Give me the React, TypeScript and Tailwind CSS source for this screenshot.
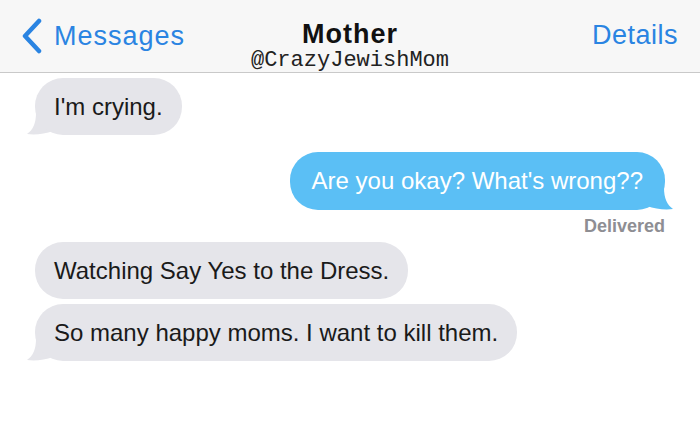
import React from 'react';

const sans = { fontFamily: '"Liberation Sans", Arial, sans-serif' };

function TailLeft({ color }: { color: string }) {
  return (
    <svg
      className="absolute -left-[8px] bottom-0"
      width="26"
      height="22"
      viewBox="0 0 26 22"
    >
      <path d="M26 0 L26 18 C18 21 8 22 0 21 C6 17 9 10 9 0 Z" fill={color} />
    </svg>
  );
}

function TailRight({ color }: { color: string }) {
  return (
    <svg
      className="absolute -right-[8px] bottom-0"
      width="26"
      height="22"
      viewBox="0 0 26 22"
    >
      <path d="M0 0 L0 18 C8 21 18 22 26 21 C20 17 17 10 17 0 Z" fill={color} />
    </svg>
  );
}

function Incoming({ text, tail }: { text: string; tail?: boolean }) {
  return (
    <div className="relative self-start ml-[35px]">
      <div className="relative z-10 bg-[#e5e5ea] rounded-[28px] h-[57px] px-[19px] flex items-center text-[24px] text-[#1a1a1a]">
        {text}
      </div>
      {tail && <TailLeft color="#e5e5ea" />}
    </div>
  );
}

function Outgoing({ text }: { text: string }) {
  return (
    <div className="relative self-end mr-[35px]">
      <div className="relative z-10 bg-[#5bbff5] rounded-[28px] h-[58px] px-[22px] flex items-center text-[24px] text-white">
        {text}
      </div>
      <TailRight color="#5bbff5" />
    </div>
  );
}

export default function App() {
  return (
    <div className="w-[700px] h-[425px] bg-white overflow-hidden flex flex-col" style={sans}>
      <header className="h-[73px] shrink-0 bg-[#f7f7f7] border-b border-[#c9c9c9] relative flex items-start justify-between pl-[21px] pr-[22px] pt-[18px]">
        <div className="flex items-center gap-[11px] text-[#2a84e2] text-[27px] tracking-[1px]">
          <svg width="22" height="36" viewBox="0 0 22 36">
            <path d="M18 3 L4 18 L18 33" fill="none" stroke="#2a84e2" strokeWidth="4.5" strokeLinecap="round" strokeLinejoin="round" />
          </svg>
          <span className="leading-none mt-[1px]">Messages</span>
        </div>
        <div className="absolute left-0 right-0 top-[21px] flex flex-col items-center pointer-events-none">
          <span className="text-[27px] tracking-[1px] font-bold text-[#111] leading-none">Mother</span>
          <span
            className="text-[22px] text-[#222] leading-none mt-[2px]"
            style={{ fontFamily: '"Liberation Mono", "Courier New", monospace' }}
          >
            @CrazyJewishMom
          </span>
        </div>
        <span className="text-[#2a84e2] text-[27px] tracking-[0.5px] leading-none mt-[4px]">Details</span>
      </header>
      <div className="flex flex-col">
        <div className="mt-[5px] flex flex-col">
          <Incoming text="I'm crying." tail />
        </div>
        <div className="mt-[17px] flex flex-col">
          <Outgoing text="Are you okay? What's wrong??" />
        </div>
        <div className="self-end mr-[35px] mt-[5px] text-[18px] leading-[22px] font-bold text-[#8e8e93]">Delivered</div>
        <div className="mt-[5px] flex flex-col">
          <Incoming text="Watching Say Yes to the Dress." />
        </div>
        <div className="mt-[5px] flex flex-col">
          <Incoming text="So many happy moms. I want to kill them." tail />
        </div>
      </div>
    </div>
  );
}
